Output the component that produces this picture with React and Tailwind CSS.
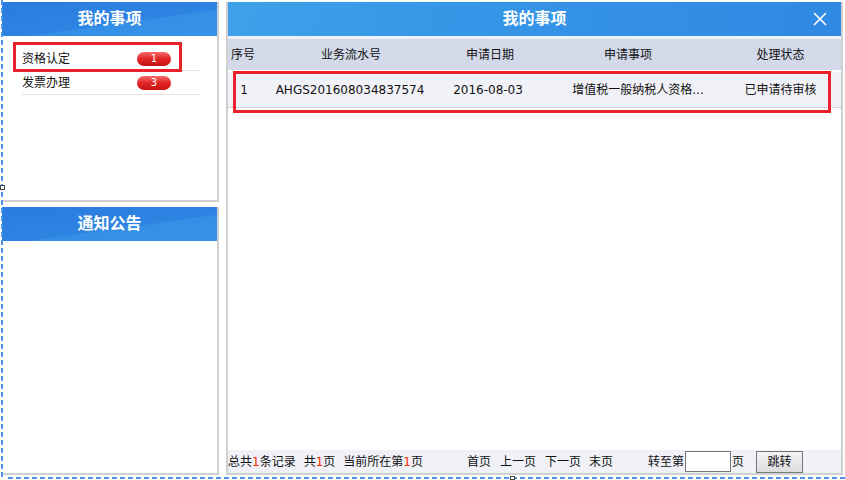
import { X } from "lucide-react";

const FONT = "font-['DejaVu_Sans','Noto_Sans_CJK_SC',sans-serif]";

const headerBg =
  "bg-[linear-gradient(172deg,#2a7ce0_0%,#2e84e2_58%,#3390e6_60%,#3894e8_100%)]";

const todo = [
  { name: "资格认定", count: 1 },
  { name: "发票办理", count: 3 },
];

const Badge = ({ n }) => (
  <span className="w-[34px] h-[14px] rounded-full bg-[linear-gradient(180deg,#f56a6a_0%,#e02424_50%,#c81414_100%)] text-white text-[10px] leading-[14px] text-center">
    {n}
  </span>
);

const PanelHead = ({ title }) => (
  <div
    className={`${headerBg} h-[34px] flex items-center justify-center text-white text-[16px] font-bold`}
  >
    {title}
  </div>
);

export default function App() {
  return (
    <div
      className={`${FONT} relative w-[845px] h-[480px] bg-white text-[12px] text-[#111] overflow-hidden`}
    >
      {/* dashed frame */}
      <div className="absolute left-[1px] top-0 bottom-[3px] w-[2px] bg-[repeating-linear-gradient(to_bottom,#4a95e8_0_5px,transparent_5px_8px)]" />
      <div className="absolute left-[8px] right-0 bottom-[1px] h-[2px] bg-[repeating-linear-gradient(to_right,#4a95e8_0_5px,transparent_5px_8px)]" />
      <div className="absolute left-0 top-[185px] w-[5px] h-[5px] border border-[#444] bg-white" />
      <div className="absolute left-[510px] bottom-0 w-[5px] h-[4px] border border-[#444] bg-white" />

      <div className="flex pl-[2px] pt-[2px] gap-[7px]">
        {/* left column */}
        <div className="w-[217px] flex flex-col gap-[5px]">
          <div className="h-[200px] border-r-2 border-b-2 border-[#cfcfcf]">
            <PanelHead title="我的事项" />
            <div className="pt-[11px] pl-[20px] pr-[18px]">
              {todo.map((t) => (
                <div
                  key={t.name}
                  className="h-[24px] flex items-center justify-between pr-[28px] border-b border-[#e4e4e4]"
                >
                  <span>{t.name}</span>
                  <Badge n={t.count} />
                </div>
              ))}
            </div>
          </div>
          <div className="h-[268px] border-r-2 border-b-2 border-[#cfcfcf]">
            <PanelHead title="通知公告" />
          </div>
        </div>

        {/* right panel */}
        <div className="w-[617px] h-[473px] border-l-2 border-r-2 border-b-2 border-[#cfcfcf] flex flex-col">
          <div
            className={`bg-[linear-gradient(100deg,#3fa0ea_0%,#3696e7_40%,#2f89e3_100%)] h-[34px] relative flex items-center justify-center text-white text-[16px] font-bold`}
          >
            我的事项
            <X
              className="absolute right-[10px] top-[6px]"
              size={22}
              strokeWidth={1.8}
              color="#fff"
            />
          </div>
          <div className="h-[3px] bg-[#eef1f7]" />
          <div className="h-[31px] bg-[#d3d9e8] grid grid-cols-[30px_186px_92px_184px_1fr] items-center text-center">
            <span>序号</span>
            <span>业务流水号</span>
            <span>申请日期</span>
            <span>申请事项</span>
            <span>处理状态</span>
          </div>
          <div className="mt-[2px] h-[36px] bg-[#f1f2f8] border-b border-dotted border-[#bbb] grid grid-cols-[30px_184px_92px_186px_1fr] items-center text-center">
            <span className="pl-[2px]">1</span>
            <span>AHGS201608034837574</span>
            <span>2016-08-03</span>
            <span className="pl-[22px]">增值税一般纳税人资格...</span>
            <span>已申请待审核</span>
          </div>

          <div className="flex-1" />

          <div className="h-[23px] bg-[#f0f1f7] flex items-center whitespace-nowrap">
            <span>
              总共<span className="text-[#ff2a00]">1</span>条记录
            </span>
            <span className="ml-[8px]">
              共<span className="text-[#ff2a00]">1</span>页
            </span>
            <span className="ml-[8px]">
              当前所在第<span className="text-[#ff2a00]">1</span>页
            </span>
            <span className="ml-[44px]">首页</span>
            <span className="ml-[9px]">上一页</span>
            <span className="ml-[9px]">下一页</span>
            <span className="ml-[8px]">末页</span>
            <span className="ml-[35px]">转至第</span>
            <input
              className="ml-[1px] w-[46px] h-[21px] bg-white border border-[#777] outline-none"
              type="text"
            />
            <span className="ml-[1px]">页</span>
            <button className="ml-[12px] w-[47px] h-[22px] bg-[linear-gradient(180deg,#f4f4f4,#dcdcdc)] border border-[#777] text-[12px]">
              跳转
            </button>
          </div>
        </div>
      </div>

      {/* highlight boxes */}
      <div className="absolute left-[13px] top-[42px] w-[169px] h-[30px] border-[3px] border-[#e8212b]" />
      <div className="absolute left-[233px] top-[71px] w-[598px] h-[42px] border-[3px] border-[#e8212b]" />
    </div>
  );
}
